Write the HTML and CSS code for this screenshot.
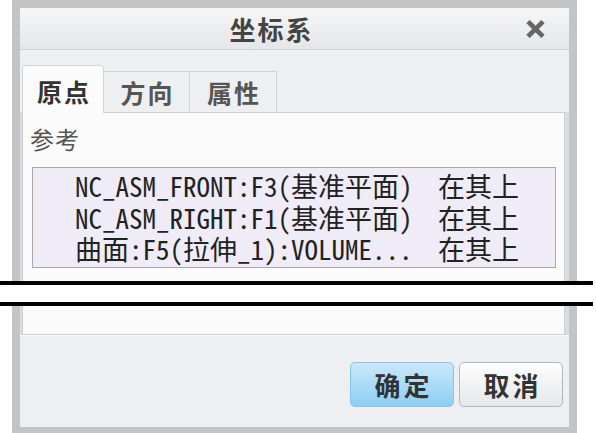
FILE: index.html
```html
<!DOCTYPE html>
<html lang="zh-CN">
<head>
  <meta charset="UTF-8">
  <meta name="viewport" content="width=device-width, initial-scale=1.0">
  <title>坐标系</title>
  <link rel="stylesheet" href="styles.css">
</head>
<body>
  <div class="window">
    <div class="dialog">
      <div class="titlebar">
        <div class="title">坐标系</div>
        <div class="close">
          <svg width="19" height="18" viewBox="0 0 19 18">
            <path d="M2 1.5 L17 16.5 M17 1.5 L2 16.5" stroke="#666" stroke-width="4.6" fill="none"/>
          </svg>
        </div>
      </div>
      <div class="tabs">
        <div class="tab active">原点</div>
        <div class="tab">方向</div>
        <div class="tab wide">属性</div>
      </div>
      <div class="body">
        <div class="panel">
          <div class="label">参考</div>
          <div class="refs">
            <div class="ref">NC_ASM_FRONT:F3(基准平面)</div><div class="state">在其上</div>
            <div class="ref">NC_ASM_RIGHT:F1(基准平面)</div><div class="state">在其上</div>
            <div class="ref">曲面:F5(拉伸_1):VOLUME...</div><div class="state">在其上</div>
          </div>
        </div>
      </div>
      <div class="footer">
        <button class="btn ok">确定</button>
        <button class="btn">取消</button>
      </div>
    </div>
  </div>
  <div class="cut"></div>
</body>
</html>
```

FILE: styles.css
```css
body {
  margin: 0;
  background: #fff;
  font-family: "Noto Sans CJK SC", sans-serif;
  position: relative;
  width: 596px;
  height: 433px;
  overflow: hidden;
}
.window {
  margin-left: 12px;
  width: 565px;
  box-sizing: border-box;
  padding: 8px 8px 6px 8px;
  background: #c3c4c6;
}
.dialog {
  background: #eeeff1;
}
.titlebar {
  display: flex;
  height: 41px;
  border-bottom: 1px solid #cfd1d4;
  background: linear-gradient(#f6f6f7, #e5e6e8);
}
.title {
  flex: 1;
  text-align: center;
  padding-left: 2px;
  font-size: 26px;
  font-weight: bold;
  letter-spacing: 2px;
  line-height: 41px;
  color: #444;
}
.close {
  width: 48px;
  display: flex;
  align-items: center;
  padding-left: 5px;
  box-sizing: border-box;
}
.tabs {
  display: flex;
  align-items: flex-end;
  height: 62px;
  padding-left: 2px;
}
.tab {
  width: 86px;
  height: 41px;
  box-sizing: border-box;
  border: 1px solid #d2d4d7;
  border-bottom: none;
  border-left: none;
  padding-left: 2px;
  text-align: center;
  font-size: 25px;
  font-weight: bold;
  letter-spacing: 2px;
  line-height: 40px;
  color: #555;
}
.tab.wide {
  width: 87px;
}
.tab.active {
  width: 82px;
  height: 48px;
  margin-bottom: -1px;
  position: relative;
  z-index: 1;
  border-left: 1px solid #d2d4d7;
  border-radius: 4px 4px 0 0;
  background: #fbfbfb;
  color: #333;
  line-height: 50px;
}
.body {
  background: #d9dce0;
  padding: 0 4px 0 2px;
}
.panel {
  height: 223px;
  box-sizing: border-box;
  border: 1px solid #cbced2;
  background: #fbfbfb;
  padding: 11px 8px 0 7px;
}
.label {
  font-size: 24px;
  letter-spacing: 1px;
  line-height: 30px;
  color: #555;
}
.refs {
  display: grid;
  grid-template-columns: 363px auto;
  margin: 13px 0 0 2px;
  height: 101px;
  box-sizing: border-box;
  padding: 4px 0 0 42px;
  border: 1px solid #a9a9ad;
  background: #efecf8;
  font-family: "Noto Sans Mono CJK SC", "Liberation Mono", monospace;
  font-size: 27px;
  line-height: 27.5px;
  color: #222;
}
.ref, .state {
  white-space: nowrap;
}
.footer {
  height: 92px;
  box-sizing: border-box;
  border-top: 1px solid #fff;
  padding: 26px 6px 0 0;
  display: flex;
  justify-content: flex-end;
  gap: 5px;
}
.btn {
  width: 104px;
  height: 45px;
  border: 1px solid #b4b6b9;
  border-radius: 5px;
  background: linear-gradient(#fdfdfd, #e6e7e9);
  font-family: "Noto Sans CJK SC", sans-serif;
  font-size: 26px;
  font-weight: bold;
  letter-spacing: 3px;
  color: #333;
  padding: 0 0 0 3px;
}
.btn.ok {
  border-color: #86c4ea;
  background: linear-gradient(#c9e8fa, #8dcff3);
}
.cut {
  position: absolute;
  top: 281px;
  left: 0;
  width: 593px;
  height: 25px;
  box-sizing: border-box;
  border-top: 4px solid #000;
  border-bottom: 4px solid #000;
  background: #fff;
}
```
